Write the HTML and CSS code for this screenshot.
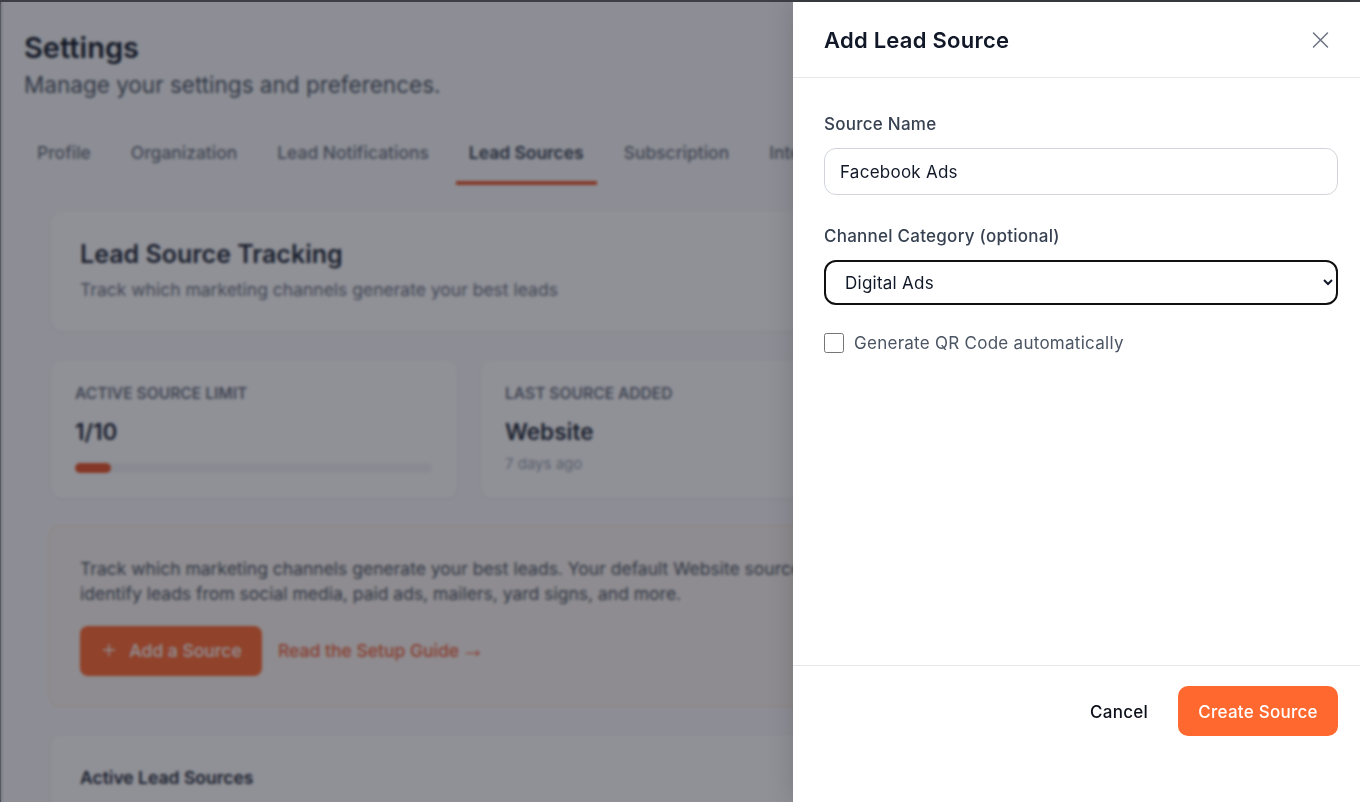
FILE: index.html
```html
<!DOCTYPE html>
<html lang="en">
<head>
    <meta charset="UTF-8">
    <meta name="viewport" content="width=device-width, initial-scale=1.0">
    <title>Settings - Lead Sources</title>
    <link rel="stylesheet" href="styles.css">
</head>
<body>
    <div class="page">
        <h1>Settings</h1>
        <p class="page-sub">Manage your settings and preferences.</p>

        <nav class="tabs">
            <a class="tab">Profile</a>
            <a class="tab">Organization</a>
            <a class="tab">Lead Notifications</a>
            <a class="tab active">Lead Sources</a>
            <a class="tab">Subscription</a>
            <a class="tab">Integrations</a>
        </nav>

        <div class="content">
            <section class="card intro">
                <h2>Lead Source Tracking</h2>
                <p>Track which marketing channels generate your best leads</p>
            </section>

            <div class="stats">
                <div class="card stat">
                    <div class="stat-label">ACTIVE SOURCE LIMIT</div>
                    <div class="stat-value">1/10</div>
                    <div class="bar"><div class="bar-fill"></div></div>
                </div>
                <div class="card stat">
                    <div class="stat-label">LAST SOURCE ADDED</div>
                    <div class="stat-value">Website</div>
                    <div class="stat-note">7 days ago</div>
                </div>
            </div>

            <section class="banner">
                <p>Track which marketing channels generate your best leads. Your default Website source is already active. Add sources to<br>identify leads from social media, paid ads, mailers, yard signs, and more.</p>
                <div class="banner-actions">
                    <button class="add-btn" type="button">
                        <svg width="14" height="14" viewBox="0 0 14 14" fill="none" stroke="#ffffff" stroke-width="1.4"><path d="M7 1v12M1 7h12"/></svg>
                        Add a Source
                    </button>
                    <a class="guide-link">Read the Setup Guide <span class="arrow">→</span></a>
                </div>
            </section>

            <section class="card sources">
                <h3>Active Lead Sources</h3>
            </section>
        </div>
    </div>

    <div class="overlay">
        <aside class="panel">
            <header class="panel-head">
                <h2>Add Lead Source</h2>
                <button class="close" type="button" aria-label="Close">
                    <svg width="24" height="24" viewBox="0 0 24 24" fill="none" stroke="#6b7280" stroke-width="1.5" stroke-linecap="round"><path d="M5.5 5l14 14M19.5 5l-14 14"/></svg>
                </button>
            </header>
            <form class="panel-body">
                <label class="field-label" for="source-name">Source Name</label>
                <input class="text-input" id="source-name" type="text" value="Facebook Ads">

                <label class="field-label second" for="channel">Channel Category (optional)</label>
                <select class="select-input" id="channel">
                    <option>Digital Ads</option>
                </select>

                <label class="check-row">
                    <input type="checkbox">
                    <span>Generate QR Code automatically</span>
                </label>
            </form>
            <footer class="panel-foot">
                <button class="cancel" type="button">Cancel</button>
                <button class="create" type="button">Create Source</button>
            </footer>
        </aside>
    </div>
</body>
</html>
```

FILE: styles.css
```css
* {
    box-sizing: border-box;
}
html, body {
    height: 100%;
}
body {
    margin: 0;
    overflow: hidden;
    font-family: Inter, "Liberation Sans", sans-serif;
    background: #f9fafb;
    color: #111827;
    border-top: 2px solid #3b3e43;
}
h1, h2, h3, p {
    margin: 0;
}
.page {
    height: 800px;
    width: 1360px;
    overflow: hidden;
    padding: 27px 0 0 23px;
    border-left: 1px solid #5b5e66;
}
h1 {
    font-size: 29px;
    line-height: 38px;
    font-weight: 600;
}
.page-sub {
    margin-top: 2px;
    font-size: 22.5px;
    line-height: 32px;
    color: #4b5563;
}
.tabs {
    display: flex;
    gap: 14px;
    margin-top: 33px;
    white-space: nowrap;
}
.tab {
    padding: 0 13px;
    height: 51px;
    line-height: 38px;
    font-size: 17.44px;
    font-weight: 500;
    color: #6b7280;
    flex: none;
}
.tab.active {
    color: #374151;
    font-weight: 600;
    border-bottom: 4px solid #e8562a;
}
.content {
    width: 1270px;
    margin: 25px 0 0 26px;
}
.card {
    background: #ffffff;
    border: 1px solid #f3f4f6;
    border-radius: 12px;
    box-shadow: 0 1px 3px rgba(0, 0, 0, 0.05);
}
.intro {
    height: 122px;
    padding: 25px 29px;
}
.intro h2 {
    font-size: 25px;
    line-height: 36px;
    font-weight: 600;
    color: #1f2937;
}
.intro p {
    margin-top: 6px;
    font-size: 17.5px;
    line-height: 24px;
    color: #6b7280;
}
.stats {
    display: grid;
    grid-template-columns: repeat(3, 408px);
    gap: 22px;
    margin-top: 27px;
}
.stat {
    height: 140px;
    padding: 24px;
}
.stat-label {
    font-size: 15.6px;
    line-height: 20px;
    font-weight: 600;
    color: #6b7280;
}
.stat-value {
    margin-top: 12px;
    font-size: 22.5px;
    line-height: 32px;
    font-weight: 600;
    color: #1f2937;
}
.bar {
    margin-top: 15px;
    height: 10px;
    width: 357px;
    background: #f3f4f6;
    border-radius: 5px;
}
.bar-fill {
    width: 10%;
    height: 100%;
    background: #e8562a;
    border-radius: 5px;
}
.stat-note {
    margin-top: 6px;
    font-size: 15px;
    line-height: 20px;
    color: #9ca3af;
}
.banner {
    margin-top: 26px;
    height: 182px;
    margin-left: -2px;
    padding: 30px 31px;
    background: #fcf6f2;
    border: 1px solid #fde0d2;
    border-radius: 12px;
}
.banner p {
    font-size: 17.5px;
    line-height: 25px;
    color: #4b5563;
    white-space: nowrap;
}
.banner-actions {
    display: flex;
    align-items: center;
    gap: 16px;
    margin-top: 20px;
}
.add-btn {
    display: flex;
    align-items: center;
    justify-content: center;
    gap: 13px;
    width: 182px;
    height: 50px;
    padding: 0 0 2px 2px;
    border: 0;
    border-radius: 8px;
    background: #ff6a33;
    color: #ffffff;
    font: 500 17.5px Inter, "Liberation Sans", sans-serif;
}
.guide-link {
    margin-bottom: 4px;
    font-size: 17.5px;
    font-weight: 500;
    color: #f0613a;
}
.arrow {
    margin-left: -3px;
    font-family: "Liberation Sans", sans-serif;
    font-size: 24px;
    line-height: 1;
    font-weight: 400;
}
.sources {
    margin-top: 27px;
    height: 200px;
    padding: 31px 29px;
}
.sources h3 {
    font-size: 17.5px;
    line-height: 24px;
    font-weight: 600;
    color: #1f2937;
}

.overlay {
    position: fixed;
    top: 2px;
    left: 0;
    right: 0;
    bottom: 0;
    display: flex;
    justify-content: flex-end;
    background: rgba(20, 22, 34, 0.47);
    backdrop-filter: blur(1.5px);
}
.panel {
    width: 567px;
    background: #ffffff;
    display: flex;
    flex-direction: column;
    box-shadow: 0 0 25px rgba(0, 0, 0, 0.18);
}
.panel-head {
    flex: none;
    height: 76px;
    padding: 0 28px 0 31px;
    display: flex;
    align-items: center;
    justify-content: space-between;
    border-bottom: 1px solid #e5e7eb;
}
.panel-head h2 {
    font-size: 22px;
    font-weight: 600;
    letter-spacing: 0.25px;
    color: #111827;
}
.close {
    display: flex;
    padding: 0;
    border: 0;
    background: none;
}
.panel-body {
    flex: 1;
    display: flex;
    flex-direction: column;
    padding: 33px 22px 0 31px;
}
.field-label {
    font-size: 17px;
    line-height: 26px;
    font-weight: 500;
    letter-spacing: 0.25px;
    color: #374151;
}
.field-label.second {
    margin-top: 28px;
}
.text-input {
    margin-top: 11px;
    height: 47px;
    padding: 0 15px;
    border: 1px solid #d1d5db;
    border-radius: 12px;
    font: 400 17px Inter, "Liberation Sans", sans-serif;
    letter-spacing: 0.25px;
    color: #111827;
    background: #ffffff;
}
.select-input {
    margin-top: 11px;
    height: 45px;
    padding: 0 15px;
    border: 2px solid #101010;
    border-radius: 12px;
    font: 400 17px Inter, "Liberation Sans", sans-serif;
    letter-spacing: 0.25px;
    color: #111827;
    background: #ffffff;
}
.check-row {
    margin-top: 28px;
    display: flex;
    align-items: center;
    gap: 10px;
    font-size: 17px;
    line-height: 20px;
    letter-spacing: 0.27px;
    color: #4b5563;
}
.check-row input {
    width: 20px;
    height: 20px;
    margin: 0;
}
.panel-foot {
    flex: none;
    height: 137px;
    padding: 20px 22px 0 0;
    display: flex;
    align-items: flex-start;
    justify-content: flex-end;
    gap: 10px;
    border-top: 1px solid #e5e7eb;
}
.cancel {
    height: 50px;
    padding: 2px 20px 0;
    border: 0;
    background: none;
    font: 500 17px Inter, "Liberation Sans", sans-serif;
    letter-spacing: 0.25px;
    color: #0b0f19;
}
.create {
    width: 160px;
    height: 50px;
    padding: 2px 0 0;
    border: 0;
    border-radius: 10px;
    background: #ff682f;
    color: #ffffff;
    font: 500 17px Inter, "Liberation Sans", sans-serif;
    letter-spacing: 0.25px;
}
```
